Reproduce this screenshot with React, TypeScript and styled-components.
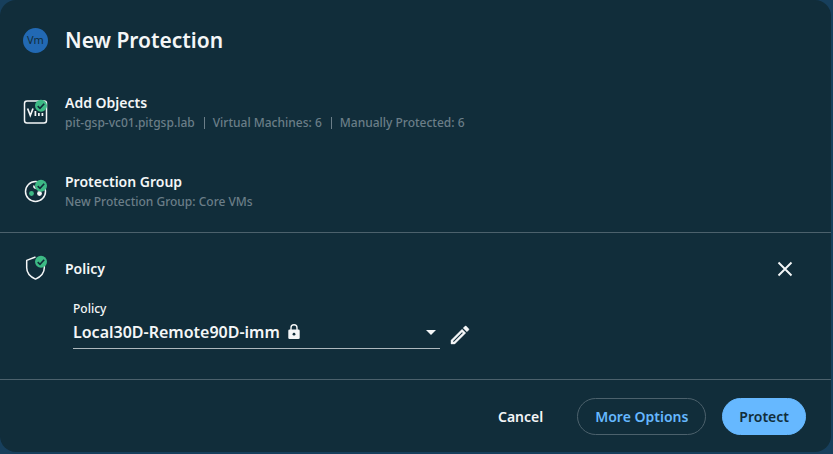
import React from "react";
import styled, { createGlobalStyle } from "styled-components";

const GlobalStyle = createGlobalStyle`
  *, *::before, *::after { box-sizing: border-box; }
  html, body, #root { height: 100%; }
  body {
    margin: 0;
    background: #173f5c;
    color: #f4f6f7;
    font-family: "Noto Sans", "Open Sans", sans-serif;
    font-size: 14px;
  }
  h1, h2, p { margin: 0; }
  button, select { font: inherit; color: inherit; }
  svg { display: block; }
`;

const Page = styled.main`
  min-height: 100%;
  padding: 0 2px 2px 0;
  display: flex;
`;

const Dialog = styled.section`
  flex: 1;
  display: flex;
  flex-direction: column;
  background: #112d3a;
  border-radius: 16px;
`;

const Header = styled.header`
  display: grid;
  grid-template-columns: 42px 1fr;
  align-items: center;
  padding: 24px 24px 17px 23px;
`;

const Title = styled.h1`
  font-size: 21px;
  line-height: 32px;
  font-weight: 600;
`;

const Step = styled.section`
  display: grid;
  grid-template-columns: 42px 1fr;
  align-items: center;
  padding: 20px 24px 19px 23px;
`;

const StepTitle = styled.h2`
  font-size: 14px;
  line-height: 20px;
  font-weight: 600;
`;

const Facts = styled.p`
  display: flex;
  align-items: center;
  font-size: 12px;
  line-height: 20px;
  font-weight: 500;
  color: #6b7e88;
`;

const Fact = styled.span`
  & + & {
    margin-left: 9px;
    padding-left: 9px;
    background: linear-gradient(#6b7e88, #6b7e88) left center / 1px 12px no-repeat;
  }
`;

const PolicyStep = styled.section`
  margin-top: 1px;
  border-top: 1px solid #4c616c;
  border-bottom: 1px solid #4c616c;
  padding: 20px 24px 30px 23px;
`;

const PolicyHead = styled.div`
  display: grid;
  grid-template-columns: 42px 1fr auto;
  align-items: center;
  height: 32px;
  padding-right: 14px;
`;

const IconButton = styled.button`
  display: flex;
  padding: 0;
  border: 0;
  background: none;
  cursor: pointer;
`;

const Field = styled.div`
  width: 50%;
  max-width: 480px;
`;

const FieldRow = styled.div`
  display: flex;
  align-items: center;
  gap: 8px;
  margin: 16px 0 0 50px;
`;

const Label = styled.label`
  display: block;
  font-size: 12px;
  line-height: 16px;
  font-weight: 500;
`;

const SelectBox = styled.div`
  display: flex;
  align-items: center;
  height: 32px;
  padding: 0 4px 1px 0;
  border-bottom: 1px solid #aeb8bd;
`;

const Select = styled.select`
  appearance: none;
  field-sizing: content;
  padding: 0;
  margin-right: 6px;
  border: 0;
  background: transparent;
  font-size: 16px;
  line-height: 24px;
  font-weight: 600;

  option { color: #112d3a; }
`;

const CaretSlot = styled.span`
  margin-left: auto;
`;

const EditSlot = styled.div`
  padding-top: 20px;
`;

const Footer = styled.footer`
  display: flex;
  justify-content: flex-end;
  align-items: center;
  padding: 18px 25px 16px;
`;

const Button = styled.button<{ $kind: "text" | "outline" | "solid" }>`
  height: 37px;
  padding: 0 ${(p) => (p.$kind === "solid" ? 16 : 17)}px 1px;
  border: 1px solid
    ${(p) => (p.$kind === "outline" ? "#4c616c" : p.$kind === "solid" ? "#66b8ff" : "transparent")};
  border-radius: 19px;
  background: ${(p) => (p.$kind === "solid" ? "#66b8ff" : "transparent")};
  color: ${(p) => (p.$kind === "outline" ? "#66b8ff" : p.$kind === "solid" ? "#112d3a" : "#f4f6f7")};
  font-size: 14px;
  font-weight: 600;
  cursor: pointer;

  & + & { margin-left: 16px; }
`;

const VmBadge = styled.span`
  display: grid;
  place-items: center;
  width: 25px;
  height: 25px;
  border-radius: 50%;
  background: #2269b3;
  color: #112d3a;
  font-size: 11px;
  line-height: 16px;
`;

const Check = () => (
  <g>
    <circle cx="18" cy="6.8" r="6" fill="#3dba85" />
    <path d="M14.7 7.1l2.3 2.2 4.2-4.6" fill="none" stroke="#112d3a" strokeWidth="1.6" />
  </g>
);

const VmIcon = () => (
  <svg width="25" height="26" viewBox="0 1 25 26" overflow="visible" aria-hidden="true">
    <rect x="1.5" y="2" width="22" height="22" rx="2.5" fill="none" stroke="#f4f6f7" strokeWidth="1.5" />
    <path
      d="M4.6 9.5l2.7 7 2.7-7M12.4 17v-5M15.900 17v-3M19.400 17v-3"
      fill="none"
      stroke="#f4f6f7"
      strokeWidth="1.7"
    />
    <Check />
  </svg>
);

const GroupIcon = () => (
  <svg width="25" height="24" viewBox="0 1 25 24" overflow="visible" aria-hidden="true">
    <circle cx="12.5" cy="12.5" r="10" fill="none" stroke="#f4f6f7" strokeWidth="1.5" />
    <circle cx="8.500" cy="14.500" r="2.400" fill="#3dba85" />
    <circle cx="16.500" cy="14.500" r="2.400" fill="#f4f6f7" />
    <path d="M11 6.500a2.500 2.500 0 0 0 1.800 3" fill="none" stroke="#f4f6f7" strokeWidth="1.500" />
    <Check />
  </svg>
);

const ShieldIcon = () => (
  <svg width="25" height="26" viewBox="0 1 25 26" overflow="visible" aria-hidden="true">
    <path
      d="M12.500 2L3.700 5.400v7.300c0 5 3.500 9 8.800 11.400 5.300-2.400 8.800-6.400 8.800-11.400V6"
      fill="none"
      stroke="#f4f6f7"
      strokeWidth="1.500"
      strokeLinejoin="round"
    />
    <Check />
  </svg>
);

const LockIcon = () => (
  <svg width="16" height="18" viewBox="0 0 16 18" role="img" aria-label="Locked policy">
    <path d="M5 7V4.800a3 3 0 0 1 6 0V7" fill="none" stroke="#f4f6f7" strokeWidth="1.400" />
    <rect x="2.300" y="6.500" width="11.400" height="9.500" rx="1.300" fill="#f4f6f7" />
    <circle cx="8" cy="11.200" r="1.400" fill="#112d3a" />
  </svg>
);

const CloseIcon = () => (
  <svg width="16" height="16" viewBox="0 0 16 16" aria-hidden="true">
    <path d="M1.500 1.500l13 13M14.500 1.500l-13 13" stroke="#f4f6f7" strokeWidth="1.900" />
  </svg>
);

const PencilIcon = () => (
  <svg width="24" height="24" viewBox="0 0 24 24" aria-hidden="true">
    <path
      fill="#f4f6f7"
      stroke="#f4f6f7"
      strokeWidth="0.4"
      d="M14.060 9.020l.92.920L5.920 19H5v-.920l9.060-9.060M17.660 3c-.250 0-.510.100-.700.290l-1.830 1.830 3.750 3.750 1.830-1.830c.390-.390.390-1.020 0-1.410l-2.340-2.340c-.200-.200-.450-.290-.710-.290zm-3.600 3.190L3 17.250V21h3.750L17.810 9.940l-3.750-3.750z"
    />
  </svg>
);

export default function App() {
  return (
    <>
      <GlobalStyle />
      <Page>
        <Dialog role="dialog" aria-labelledby="dialog-title">
          <Header>
            <VmBadge>Vm</VmBadge>
            <Title id="dialog-title">New Protection</Title>
          </Header>

          <Step>
            <VmIcon />
            <div>
              <StepTitle>Add Objects</StepTitle>
              <Facts>
                <Fact>pit-gsp-vc01.pitgsp.lab</Fact>
                <Fact>Virtual Machines: 6</Fact>
                <Fact>Manually Protected: 6</Fact>
              </Facts>
            </div>
          </Step>

          <Step>
            <GroupIcon />
            <div>
              <StepTitle>Protection Group</StepTitle>
              <Facts>
                <Fact>New Protection Group: Core VMs</Fact>
              </Facts>
            </div>
          </Step>

          <PolicyStep>
            <PolicyHead>
              <ShieldIcon />
              <StepTitle>Policy</StepTitle>
              <IconButton type="button" aria-label="Close policy">
                <CloseIcon />
              </IconButton>
            </PolicyHead>
            <FieldRow>
              <Field>
                <Label htmlFor="policy">Policy</Label>
                <SelectBox>
                  <Select id="policy" defaultValue="Local30D-Remote90D-imm">
                    <option>Local30D-Remote90D-imm</option>
                  </Select>
                  <LockIcon />
                  <CaretSlot>
                    <svg width="10" height="5" viewBox="0 0 10 5" aria-hidden="true">
                      <path d="M0 0h10L5 5z" fill="#f4f6f7" />
                    </svg>
                  </CaretSlot>
                </SelectBox>
              </Field>
              <EditSlot>
                <IconButton type="button" aria-label="Edit policy">
                  <PencilIcon />
                </IconButton>
              </EditSlot>
            </FieldRow>
          </PolicyStep>

          <Footer>
            <Button type="button" $kind="text">Cancel</Button>
            <Button type="button" $kind="outline">More Options</Button>
            <Button type="button" $kind="solid">Protect</Button>
          </Footer>
        </Dialog>
      </Page>
    </>
  );
}
